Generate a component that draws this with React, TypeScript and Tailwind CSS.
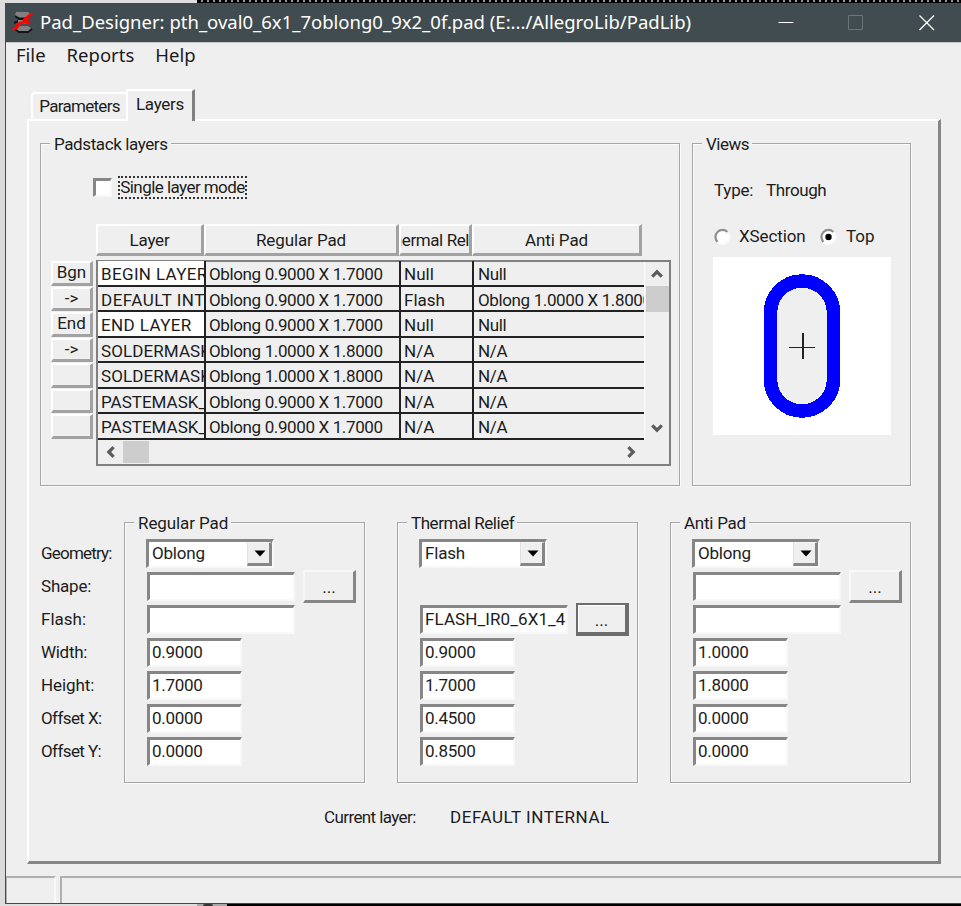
import type { ReactNode } from 'react';

const raised =
  'border-t-2 border-l-2 border-r-[3px] border-b-[3px] border-t-white border-l-white border-r-[#a2a2a2] border-b-[#a2a2a2] bg-[#efefef]';
const sunken =
  'border-t-[3px] border-l-[3px] border-r-2 border-b-2 border-t-[#868686] border-l-[#868686] border-r-[#f8f8f8] border-b-[#f8f8f8] bg-white';

const layers = [
  { btn: 'Bgn', name: 'BEGIN LAYER', pad: 'Oblong 0.9000 X 1.7000', relief: 'Null', anti: 'Null', fill: true, track: 'tracking-[0.35px]' },
  { btn: '->', name: 'DEFAULT INTERNAL', pad: 'Oblong 0.9000 X 1.7000', relief: 'Flash', anti: 'Oblong 1.0000 X 1.8000', fill: false, track: 'tracking-[0.5px]' },
  { btn: 'End', name: 'END LAYER', pad: 'Oblong 0.9000 X 1.7000', relief: 'Null', anti: 'Null', fill: true, track: 'tracking-[0.4px]' },
  { btn: '->', name: 'SOLDERMASK_TOP', pad: 'Oblong 1.0000 X 1.8000', relief: 'N/A', anti: 'N/A', fill: false, track: 'tracking-[0.1px]' },
  { btn: '', name: 'SOLDERMASK_BOTTOM', pad: 'Oblong 1.0000 X 1.8000', relief: 'N/A', anti: 'N/A', fill: false, track: 'tracking-[0.1px]' },
  { btn: '', name: 'PASTEMASK_TOP', pad: 'Oblong 0.9000 X 1.7000', relief: 'N/A', anti: 'N/A', fill: false, track: 'tracking-[0px]' },
  { btn: '', name: 'PASTEMASK_BOTTOM', pad: 'Oblong 0.9000 X 1.7000', relief: 'N/A', anti: 'N/A', fill: false, track: 'tracking-[0px]' },
];

const labels = [
  { text: 'Geometry:', track: 'tracking-[-0.8px]' },
  { text: 'Shape:', track: 'tracking-[-0.2px]' },
  { text: 'Flash:', track: 'tracking-[0px]' },
  { text: 'Width:', track: 'tracking-[-0.3px]' },
  { text: 'Height:', track: 'tracking-[-0.1px]' },
  { text: 'Offset X:', track: 'tracking-[-0.6px]' },
  { text: 'Offset Y:', track: 'tracking-[-0.6px]' },
];

function Group({ title, track, className, children }: { title: string; track: string; className: string; children: ReactNode }) {
  return (
    <fieldset className={`min-w-0 border border-[#a6a6a6] shadow-[1px_1px_0_#fafafa,inset_1px_1px_0_#fafafa] ${className}`}>
      <legend className={`ml-[9px] h-5 bg-[#efefef] pr-[3px] pl-1 leading-[22px] ${track}`}>{title}</legend>
      {children}
    </fieldset>
  );
}

function Chevron({ turn }: { turn: string }) {
  return (
    <svg className={`h-3 w-3 ${turn}`} viewBox="0 0 12 12" fill="none" stroke="#5c5c5c" strokeWidth="3.2">
      <path d="M1.2 8.6 6 3.8l4.8 4.8" />
    </svg>
  );
}

function Combo({ value }: { value: string }) {
  return (
    <div className={`ml-px flex h-[29px] w-[128px] items-center pl-[3px] ${sunken}`}>
      <span className="flex-1 tracking-[-0.2px]">{value}</span>
      <span className="flex h-full w-[25px] items-center justify-center border-t border-r-[3px] border-b-[3px] border-l border-t-[#f8f8f8] border-r-[#868686] border-b-[#868686] border-l-[#e0e0e0] bg-[#efefef]">
        <svg className="ml-0.5 h-[7px] w-3" viewBox="0 0 12 7">
          <path d="M0.5 0.5h11L6 6.5z" fill="#000" />
        </svg>
      </span>
    </div>
  );
}

function Field({ value, wide }: { value: string; wide?: boolean }) {
  return (
    <div className={`ml-0.5 flex h-[29px] items-center overflow-hidden pl-[2px] whitespace-nowrap ${wide ? 'w-[148px] tracking-[0.1px]' : 'w-[95px] tracking-[-0.3px]'} ${sunken}`}>
      {value}
    </div>
  );
}

function Browse({ active }: { active?: boolean }) {
  return (
    <button
      className={`ml-2 flex h-[33px] w-[53px] shrink-0 items-center justify-center bg-[#efefef] pt-1 ${
        active
          ? 'border-t-2 border-r-[4px] border-b-[4px] border-l-2 border-[#6c6c6c] shadow-[inset_1px_1px_0_#fff]'
          : 'border-t-2 border-r-[3px] border-b-[3px] border-l-2 border-t-[#f8f8f8] border-r-[#868686] border-b-[#868686] border-l-[#f8f8f8]'
      }`}
    >
      ...
    </button>
  );
}

function PadGroup(props: {
  title: string;
  track: string;
  geometry: string;
  shape: boolean;
  flash: string;
  activeFlash?: boolean;
  values: string[];
}) {
  return (
    <Group title={props.title} track={props.track} className="h-[271px] w-[241px]">
      <div className="flex flex-col pt-[5px] pl-5">
        <div className="flex h-[33px] items-center">
          <Combo value={props.geometry} />
        </div>
        <div className="flex h-[33px] items-center">
          {props.shape && (
            <>
              <Field value="" wide />
              <Browse />
            </>
          )}
        </div>
        <div className="flex h-[33px] items-center">
          <Field value={props.flash} wide />
          {props.activeFlash && <Browse active />}
        </div>
        {props.values.map((v, i) => (
          <div key={i} className="flex h-[33px] items-center">
            <Field value={v} />
          </div>
        ))}
      </div>
    </Group>
  );
}

function Radio({ on }: { on?: boolean }) {
  return (
    <svg className="h-[18px] w-[18px]" viewBox="0 0 18 18" fill="none">
      <circle cx="9.5" cy="9" r="6.500" fill="#fff" />
      <path d="M4.5 14A7 7 0 0 1 14.5 4" stroke="#909090" strokeWidth="2.2" />
      <path d="M14.5 4A7 7 0 0 1 4.5 14" stroke="#fafafa" strokeWidth="2" />
      {on && <circle cx="9.5" cy="9" r="3.2" fill="#000" />}
    </svg>
  );
}

function LayerTable() {
  return (
    <div className="flex flex-col">
      <div className="ml-[45px] flex h-8 text-center leading-[28px] whitespace-nowrap">
        <div className={`w-[108px] tracking-[-0.2px] ${raised}`}>Layer</div>
        <div className={`w-[195px] tracking-[-0.1px] ${raised}`}>Regular Pad</div>
        <div className={`flex w-[73px] justify-center overflow-hidden tracking-[-0.4px] ${raised}`}>
          <span>Thermal Relief</span>
        </div>
        <div className={`w-[170px] tracking-[-0.1px] ${raised}`}>Anti Pad</div>
      </div>
      <div className="mt-1 flex">
        <div className="w-[45px] pt-px">
          {layers.map((l, i) => (
            <div key={i} className="h-[25.5px]">
              <div className={`flex h-[24.5px] w-[42px] items-center justify-center ${raised}`}>{l.btn}</div>
            </div>
          ))}
        </div>
        <div className="h-[206px] w-[575px] border-2 border-[#808080]">
          <div className="flex">
            <div className="-mt-px w-[546px] overflow-hidden whitespace-nowrap">
              {layers.map((l, i) => (
                <div key={i} className="flex h-[25.5px] leading-[26px]">
                  <div className={`w-[108px] shrink-0 overflow-hidden border-r-2 border-b-2 border-[#222] pl-[3px] ${l.track} ${l.fill ? 'bg-white' : ''}`}>{l.name}</div>
                  <div className="w-[195px] shrink-0 overflow-hidden border-r-2 border-b-2 border-[#222] pl-[3px] tracking-[-0.37px]">{l.pad}</div>
                  <div className="w-[73px] shrink-0 overflow-hidden border-r-2 border-b-2 border-[#222] pl-[3px]">{l.relief}</div>
                  <div className="w-[170px] shrink-0 overflow-hidden border-b-2 border-[#222] pl-[4px] tracking-[-0.37px]">{l.anti}</div>
                </div>
              ))}
            </div>
            <div className="flex w-[25px] flex-col items-center border-l border-white">
              <div className="flex h-[24px] items-center">
                <Chevron turn="" />
              </div>
              <div className="h-[26px] w-[23px] bg-[#cdcdcd]" />
              <div className="mt-auto flex h-[24px] items-center">
                <Chevron turn="rotate-180" />
              </div>
            </div>
          </div>
          <div className="flex h-[23px] w-[546px] items-center pt-0.5">
            <div className="flex w-[25px] justify-center">
              <Chevron turn="-rotate-90" />
            </div>
            <div className="h-[22px] w-[26px] bg-[#cdcdcd]" />
            <div className="mr-[7px] ml-auto">
              <Chevron turn="rotate-90" />
            </div>
          </div>
        </div>
      </div>
    </div>
  );
}

export default function App() {
  return (
    <div className="flex h-[906px] w-[961px] flex-col overflow-hidden bg-[#dcdcdc] font-[Roboto,sans-serif] text-[17px] text-[#1c1c1c]">
      <div className="flex h-[3px] shrink-0">
        <div className="w-[197px] bg-[#dedede]" />
        <div className="flex-1 bg-black bg-[repeating-linear-gradient(90deg,#000_0_4px,#999_4px_6px)] bg-[length:100%_2px] bg-no-repeat" />
      </div>

      <div className="ml-[5px] flex h-[901px] shrink-0 flex-col border-b border-l border-[#404c50] bg-[#efefef]">
        <div className="flex h-[39px] items-center bg-[#404c50] font-['Noto_Sans',sans-serif] text-white">
          <svg className="-mt-0.5 ml-[6px] h-[22px] w-[22px]" viewBox="0 0 22 22">
            <path d="M3 5l4 3h9M3 18l4 3h9l4-3M2 12l5-2" stroke="#151515" strokeWidth="2" fill="none" />
            <path d="M4 1h12l2 2-2 3H7L3 4zM6 9h10l-2 4H6zM3 17l4-2h9l3 2-3 3H7z" fill="#808080" />
            <path d="M20 2.500L15.500 6l-1 6M15 6.500l-4 3.500M18 12.500l-4.500-1.500-5 1-4 2M8 12.500l-3 4L1 18.500" stroke="#f00" strokeWidth="2.800" fill="none" />
          </svg>
          <span className="ml-[6px] -translate-y-px text-[18.5px] whitespace-nowrap">Pad_Designer: pth_oval0_6x1_7oblong0_9x2_0f.pad (E:.../AllegroLib/PadLib)</span>
          <svg className="mr-[26px] ml-auto h-4 w-[157px]" viewBox="0 0 157 16" fill="none" strokeWidth="1">
            <path d="M0.5 7.5h15" stroke="#fff" />
            <path d="M70.5 0.5h14v14h-14z" stroke="#6b7579" />
            <path d="M141.5 0.5l14.5 14.5M156 0.5l-14.500 14.500" stroke="#fff" strokeWidth="1.2" />
          </svg>
        </div>
        <div className="flex h-[28px] gap-[21px] border-t border-[#c8c8c8] pl-[10px] font-['Noto_Sans',sans-serif] text-[18.5px] leading-[23px]">
          <span>File</span>
          <span>Reports</span>
          <span>Help</span>
        </div>

        <div className="mt-[19px] flex h-[30px] items-end pl-[25px]">
          <div className="flex h-[27px] w-[95px] justify-center rounded-tl border-t-2 border-l-2 border-white leading-[25px] tracking-[-0.7px]">Parameters</div>
          <div className="z-10 -mb-0.5 flex h-[32px] w-[69px] justify-center border-t-2 border-r-[3px] border-l-2 border-t-white border-r-[#808080] border-l-white bg-[#efefef] leading-[27px] tracking-[-0.3px]">Layers</div>
        </div>

        <div className="ml-[21px] flex h-[745px] w-[914px] flex-col border-t-2 border-r-[3px] border-b-[3px] border-l-2 border-t-white border-r-[#868686] border-b-[#868686] border-l-white pt-[12px] pl-[11px]">
          <div className="flex gap-3">
            <Group title="Padstack layers" track="tracking-[-0.4px]" className="h-[353px] w-[640px]">
              <div className="flex flex-col pt-[23px] pl-[10px]">
                <div className="mb-[25px] ml-[42px] flex h-[23px] items-center">
                  <div className={`h-[19px] w-[19px] ${sunken}`} />
                  <div className="ml-[6px] flex h-[23px] w-[129px] items-center justify-center outline-2 -outline-offset-2 outline-dotted outline-[#333] tracking-[-0.55px] whitespace-nowrap">Single layer mode</div>
                </div>
                <LayerTable />
              </div>
            </Group>
            <Group title="Views" track="tracking-[-0.5px]" className="h-[353px] w-[219px]">
              <div className="flex flex-col pl-[20px]">
                <div className="mt-[27px] flex h-5 leading-5">
                  <span className="w-[53px] pl-px tracking-[-0.2px]">Type:</span>
                  <span className="tracking-[-0.4px]">Through</span>
                </div>
                <div className="mt-[27px] flex h-5 items-center">
                  <Radio />
                  <span className="w-[88px] pl-2 tracking-[-0.1px]">XSection</span>
                  <Radio on />
                  <span className="pl-[9px]">Top</span>
                </div>
                <svg className="mt-[10px] h-[178px] w-[178px] bg-white" viewBox="0 0 178 178" shapeRendering="crispEdges">
                  <rect x="57.5" y="24" width="63" height="130" rx="31.500" fill="#efefef" stroke="#00f" strokeWidth="13.500" />
                  <path d="M76 90.500h26M90 76v26" stroke="#222" strokeWidth="1.500" />
                </svg>
              </div>
            </Group>
          </div>

          <div className="mt-[26px] flex">
            <div className="w-[84px] pt-[25px] leading-[33px] whitespace-nowrap">
              {labels.map((l) => (
                <div key={l.text} className={`h-[33px] pl-px ${l.track}`}>
                  {l.text}
                </div>
              ))}
            </div>
            <div className="flex gap-8">
              <PadGroup title="Regular Pad" track="tracking-[-0.1px]" geometry="Oblong" shape flash="" values={['0.9000', '1.7000', '0.0000', '0.0000']} />
              <PadGroup title="Thermal Relief" track="tracking-[-0.45px]" geometry="Flash" shape={false} flash="FLASH_IR0_6X1_4" activeFlash values={['0.9000', '1.7000', '0.4500', '0.8500']} />
              <PadGroup title="Anti Pad" track="tracking-[-0.25px]" geometry="Oblong" shape flash="" values={['1.0000', '1.8000', '0.0000', '0.0000']} />
            </div>
          </div>

          <div className="mt-[24px] flex pl-[284px] leading-5">
            <span className="w-[126px] tracking-[-0.6px]">Current layer:</span>
            <span className="tracking-[0.55px]">DEFAULT INTERNAL</span>
          </div>
        </div>

        <div className="mt-3 flex h-[27px] gap-1">
          <div className="w-[50px] border-t-2 border-r-2 border-l border-t-[#b0b0b0] border-r-[#fafafa] border-l-[#b0b0b0]" />
          <div className="flex-1 border-t-2 border-l-2 border-[#b0b0b0]" />
        </div>
      </div>

      <div className="flex h-[2px] shrink-0">
        <div className="w-[197px] bg-[#dedede]" />
        <div className="flex w-[30px] bg-[#a8a8a8]">
          <div className="ml-[6px] w-[10px] rounded-t bg-[#333]" />
        </div>
        <div className="flex-1 bg-black" />
      </div>
    </div>
  );
}
